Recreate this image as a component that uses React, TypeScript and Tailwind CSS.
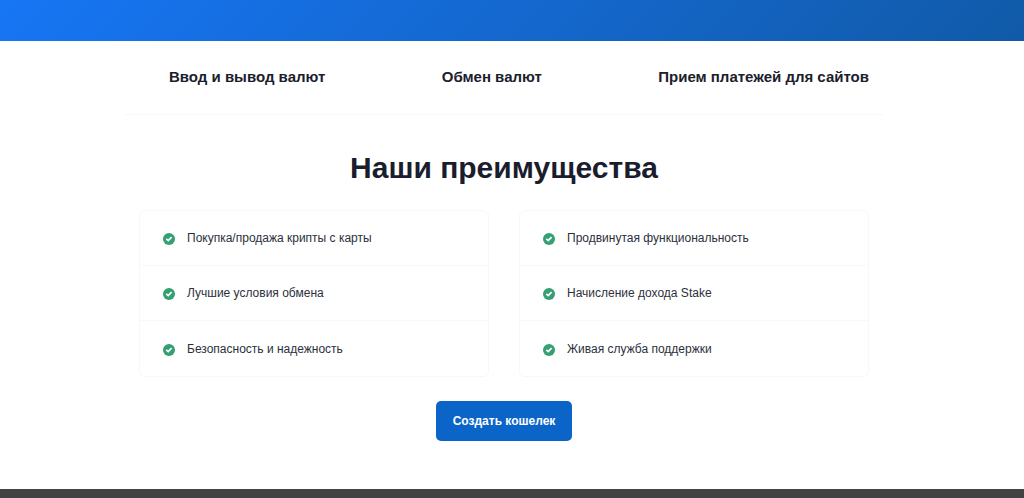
const groups = [
  ["Покупка/продажа крипты с карты", "Лучшие условия обмена", "Безопасность и надежность"],
  ["Продвинутая функциональность", "Начисление дохода Stake", "Живая служба поддержки"],
];

function CheckIcon() {
  return (
    <svg viewBox="0 0 12 12" className="mt-0.5 size-3 shrink-0" aria-hidden="true">
      <circle cx="6" cy="6" r="6" fill="#349f73" />
      <path d="M3.3 5.9 5.2 7.6 8.6 4.2" fill="none" stroke="#fff" strokeWidth="1.8" />
    </svg>
  );
}

export default function App() {
  return (
    <div className="bg-white font-['Liberation_Sans',Arial,sans-serif] text-[#1a1d2e]">
      <header className="h-[41px] bg-linear-[135deg] from-[#1776f5] to-[#115aa8]" />
      <main className="pr-4 pb-12">
        <div className="mx-auto max-w-[758px]">
          <nav className="flex justify-between border-b border-[#f8f8f9] pt-6 pr-[14px] pb-[25px] pl-11 text-[15px] leading-6 font-bold text-[#1a202c]">
            <h3>Ввод и вывод валют</h3>
            <h3>Обмен валют</h3>
            <h3>Прием платежей для сайтов</h3>
          </nav>
          <h2 className="mt-[31px] text-center text-[30px] leading-11 font-bold">Наши преимущества</h2>
          <div className="mt-5 grid grid-cols-2 gap-[30px] px-[14px]">
            {groups.map((items) => (
              <ul key={items[0]} className="divide-y divide-[#f8f8f9] rounded-md border border-[#f8f8f9]">
                {items.map((item) => (
                  <li key={item} className="flex h-[55px] items-center gap-3 px-[23px] text-xs text-[#2b303d]">
                    <CheckIcon />
                    {item}
                  </li>
                ))}
              </ul>
            ))}
          </div>
          <div className="mt-6 flex justify-center">
            <button className="h-10 rounded-[5px] bg-[#0b65c9] px-[17px] text-xs font-bold text-white">
              Создать кошелек
            </button>
          </div>
        </div>
      </main>
      <footer className="h-[10px] bg-[#424242]" />
    </div>
  );
}
